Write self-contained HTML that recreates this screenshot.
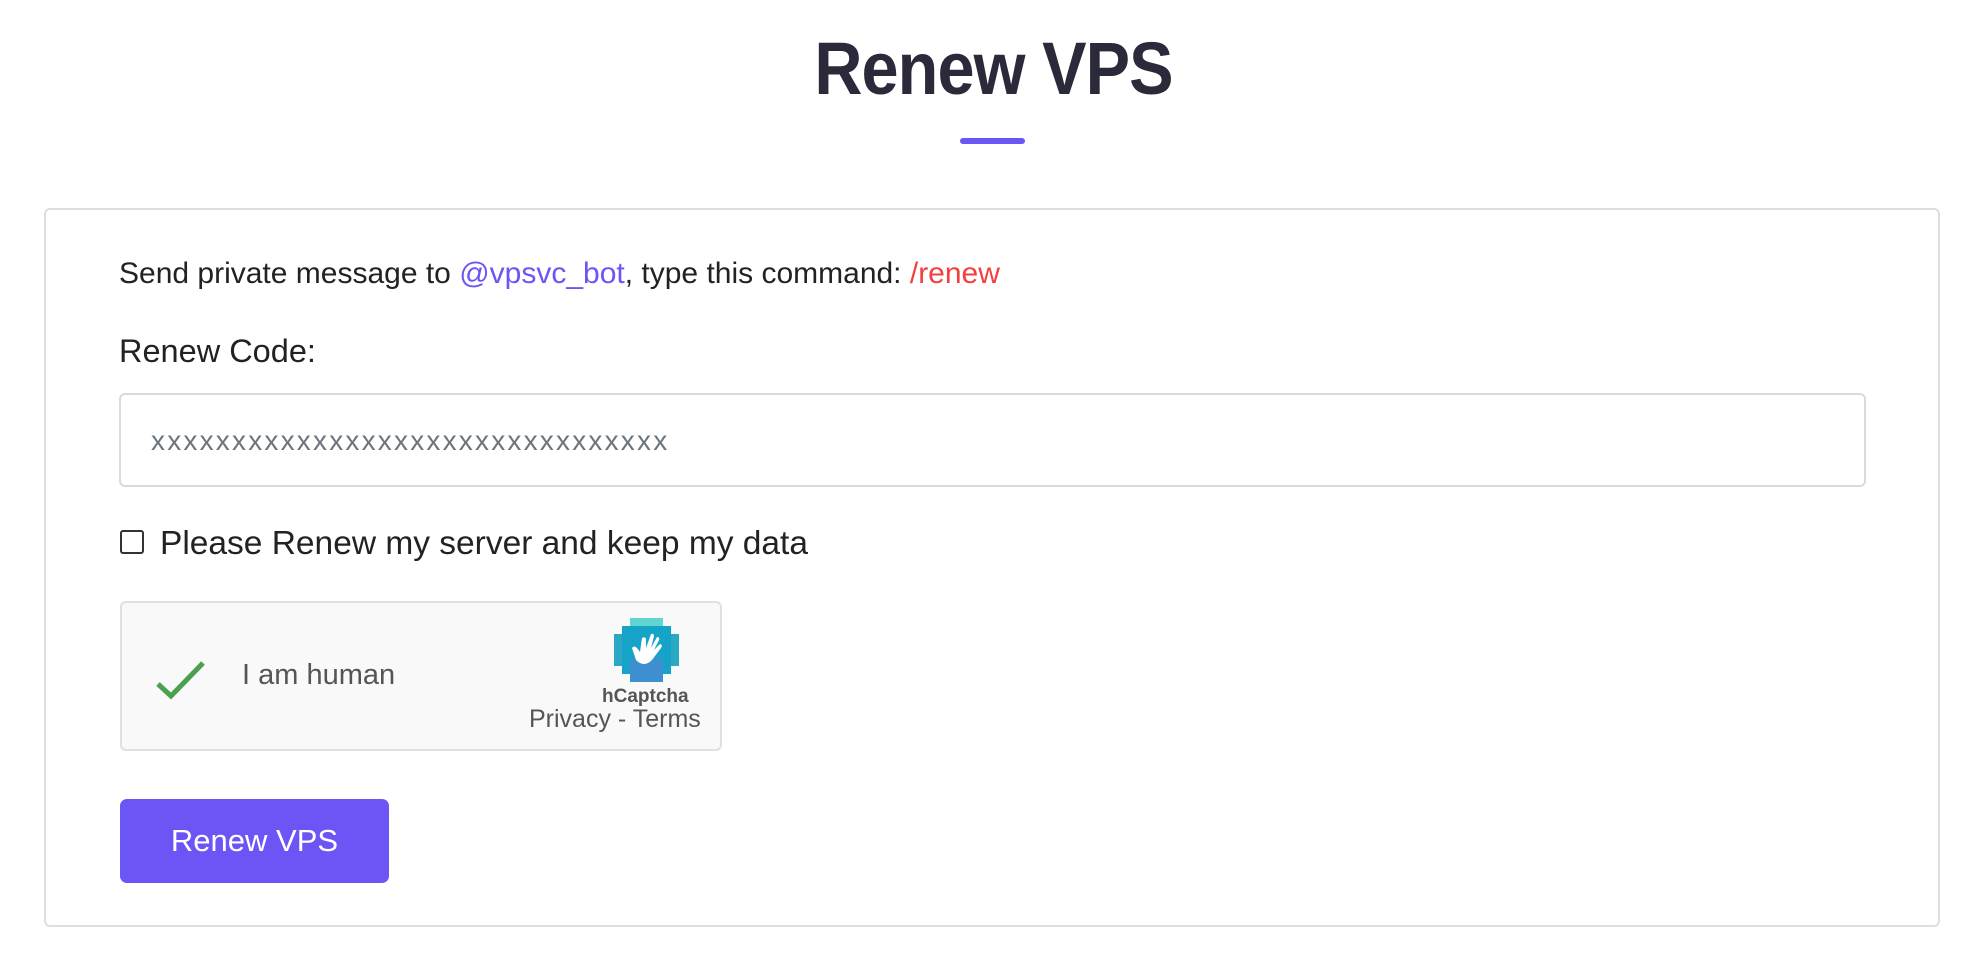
<!DOCTYPE html>
<html><head><meta charset="utf-8"><style>
html,body{margin:0;padding:0;background:#fff;width:1987px;height:966px;overflow:hidden;font-family:"Liberation Sans","DejaVu Sans",sans-serif;}
.abs{position:absolute;white-space:nowrap}
h1{position:absolute;left:0;width:1987px;top:26px;margin:0;text-align:center;font-size:74px;font-weight:bold;color:#2b2a3a;letter-spacing:-1px;transform:scaleX(0.9)}
.bar{position:absolute;left:960px;top:138px;width:65px;height:6px;border-radius:3px;background:#6b55f5}
.card{position:absolute;left:44px;top:208px;width:1896px;height:719px;border:2px solid #dedede;border-radius:6px;box-sizing:border-box}
.input{position:absolute;left:119px;top:393px;width:1747px;height:94px;border:2px solid #d8dbdc;border-radius:6px;box-sizing:border-box}
.cap{position:absolute;left:120px;top:601px;width:602px;height:150px;border:2px solid #e0e0e0;border-radius:6px;background:#f9f9f9;box-sizing:border-box}
.btn{position:absolute;left:120px;top:799px;width:269px;height:84px;border-radius:7px;background:#6b55f5;color:#fff;font-size:31px;text-align:center;line-height:84px}
</style></head><body>
<h1>Renew VPS</h1>
<div class="bar"></div>
<div class="card"></div>
<div class="abs" style="left:119px;top:257px;font-size:30px;color:#222">Send private message to <span style="color:#6b55f5">@vpsvc_bot</span>, type this command: <span style="color:#f43f3f">/renew</span></div>
<div class="abs" style="left:119px;top:333px;font-size:32.5px;color:#222">Renew Code:</div>
<div class="input"></div>
<div class="abs" style="left:151px;top:425px;font-size:28px;color:#6c757d;letter-spacing:2.2px">xxxxxxxxxxxxxxxxxxxxxxxxxxxxxxxx</div>
<div style="position:absolute;left:120px;top:530px;width:24px;height:24px;border:2px solid #333;border-radius:3px;box-sizing:border-box"></div>
<div class="abs" style="left:160px;top:525px;font-size:33.5px;color:#222">Please Renew my server and keep my data</div>
<div class="cap"></div>
<svg class="abs" style="left:155px;top:660px" width="52" height="40" viewBox="0 0 52 40"><path d="M3 24 L16 36 L48 3" fill="none" stroke="#4aa04f" stroke-width="5"/></svg>
<div class="abs" style="left:242px;top:659px;font-size:29px;color:#555">I am human</div>
<svg class="abs" style="left:614px;top:618px" width="65" height="64" viewBox="0 0 65 64">
<rect x="16" y="0" width="33" height="64" fill="#3ec4c9"/><rect x="0" y="16" width="65" height="32" fill="#2aa8c4"/>
<rect x="8" y="8" width="49" height="48" fill="#15a3c7"/><rect x="16" y="40" width="33" height="24" fill="#3d8fd0"/>
<rect x="16" y="0" width="33" height="8" fill="#5fd6cf"/>
<path d="M22 42 L18 30 Q20 27 23 30 L26 34 L28 20 Q31 18 32 21 L32 30 L37 16 Q40 15 40 18 L37 30 L43 19 Q46 19 45 22 L40 32 L46 26 Q49 27 47 30 L38 42 Q30 50 22 42Z" fill="#fff"/>
</svg>
<div class="abs" style="left:602px;top:686px;font-size:19px;font-weight:bold;color:#555">hCaptcha</div>
<div class="abs" style="left:529px;top:705px;font-size:25px;color:#555">Privacy - Terms</div>
<div class="btn">Renew VPS</div>
</body></html>
